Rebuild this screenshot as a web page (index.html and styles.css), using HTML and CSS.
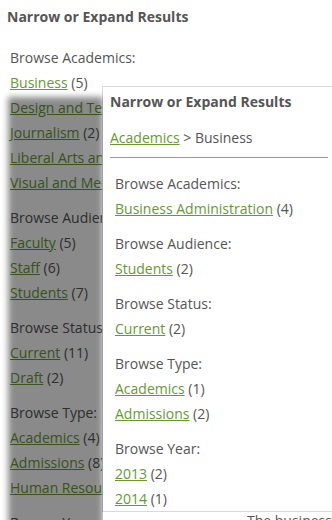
FILE: index.html
```html
<!DOCTYPE html>
<html>

<head>
    <title>Narrow or Expand Results</title>
    <link rel="stylesheet" href="styles.css">
</head>

<body>
    <div class="page">
        <div class="sidebar">
            <h2 class="facet-title">Narrow or Expand Results</h2>

            <div class="facet-group">
                <div class="facet-label">Browse Academics:</div>
                <div class="facet-item"><a href="#">Business</a> (5)</div>
                <div class="facet-item"><a href="#">Design and Technology</a> (3)</div>
                <div class="facet-item"><a href="#">Journalism</a> (2)</div>
                <div class="facet-item"><a href="#">Liberal Arts and Sciences</a> (4)</div>
                <div class="facet-item"><a href="#">Visual and Media Arts</a> (3)</div>
            </div>
            <div class="facet-group">
                <div class="facet-label">Browse Audience:</div>
                <div class="facet-item"><a href="#">Faculty</a> (5)</div>
                <div class="facet-item"><a href="#">Staff</a> (6)</div>
                <div class="facet-item"><a href="#">Students</a> (7)</div>
            </div>
            <div class="facet-group">
                <div class="facet-label">Browse Status:</div>
                <div class="facet-item"><a href="#">Current</a> (11)</div>
                <div class="facet-item"><a href="#">Draft</a> (2)</div>
            </div>
            <div class="facet-group">
                <div class="facet-label">Browse Type:</div>
                <div class="facet-item"><a href="#">Academics</a> (4)</div>
                <div class="facet-item"><a href="#">Admissions</a> (8)</div>
                <div class="facet-item"><a href="#">Human Resources</a> (1)</div>
            </div>
            <div class="facet-group">
                <div class="facet-label">Browse Year:</div>
                <div class="facet-item"><a href="#">2013</a> (6)</div>
            </div>
        </div>

        <div class="content">
            <p>The business school offers</p>
        </div>
    </div>

    <div class="facet-popup">
        <h2 class="popup-title">Narrow or Expand Results</h2>
        <div class="crumbs"><a href="#">Academics</a> &gt; Business</div>
        <hr class="divider">

        <div class="popup-groups">
            <div class="facet-group">
                <div class="facet-label">Browse Academics:</div>
                <div class="facet-item"><a href="#">Business Administration</a> (4)</div>
            </div>
            <div class="facet-group">
                <div class="facet-label">Browse Audience:</div>
                <div class="facet-item"><a href="#">Students</a> (2)</div>
            </div>
            <div class="facet-group">
                <div class="facet-label">Browse Status:</div>
                <div class="facet-item"><a href="#">Current</a> (2)</div>
            </div>
            <div class="facet-group">
                <div class="facet-label">Browse Type:</div>
                <div class="facet-item"><a href="#">Academics</a> (1)</div>
                <div class="facet-item"><a href="#">Admissions</a> (2)</div>
            </div>
            <div class="facet-group">
                <div class="facet-label">Browse Year:</div>
                <div class="facet-item"><a href="#">2013</a> (2)</div>
                <div class="facet-item"><a href="#">2014</a> (1)</div>
            </div>
        </div>
    </div>
</body>

</html>
```

FILE: styles.css
```css
body {
    font-family: "Open Sans", "DejaVu Sans", sans-serif;
    font-size: 14px;
    line-height: 25px;
    color: #555;
    margin: 0;
    background-color: #fff;
    overflow: hidden;
}

a {
    color: #669933;
    text-decoration: underline;
}

.page {
    display: flex;
    padding-top: 5px;
}

.sidebar {
    flex: 0 0 240px;
    white-space: nowrap;
    overflow: hidden;
}

.facet-title {
    font-size: 14px;
    font-weight: bold;
    line-height: 24px;
    margin: 0 0 16px 7px;
}

.sidebar .facet-group {
    padding-left: 10px;
}

.facet-group {
    margin-bottom: 10px;
}

.facet-group:last-child {
    margin-bottom: 0;
}

.content {
    flex: 1;
    padding-left: 7px;
    white-space: nowrap;
}

.content p {
    margin: 503px 0 0;
}

/* popup over the results */
.facet-popup {
    position: absolute;
    left: 102px;
    top: 86px;
    width: 218px;
    padding: 2px 7px 0 7px;
    background-color: #fff;
    border: 1px solid #d6d6ec;
    white-space: nowrap;
}

.facet-popup::before {
    content: "";
    position: absolute;
    right: 100%;
    top: 10px;
    bottom: -40px;
    width: 95px;
    background-color: rgba(0, 0, 0, 0.46);
    filter: blur(3px);
    clip-path: inset(-20px 0 -40px -20px);
}

.popup-title {
    font-size: 14px;
    font-weight: bold;
    line-height: 25px;
    margin: 0 0 11px;
}

.crumbs {
    margin-bottom: 7px;
}

.divider {
    border: 0;
    border-top: 1px solid #999;
    margin: 0 0 13px;
}

.popup-groups {
    padding-left: 5px;
}
```
